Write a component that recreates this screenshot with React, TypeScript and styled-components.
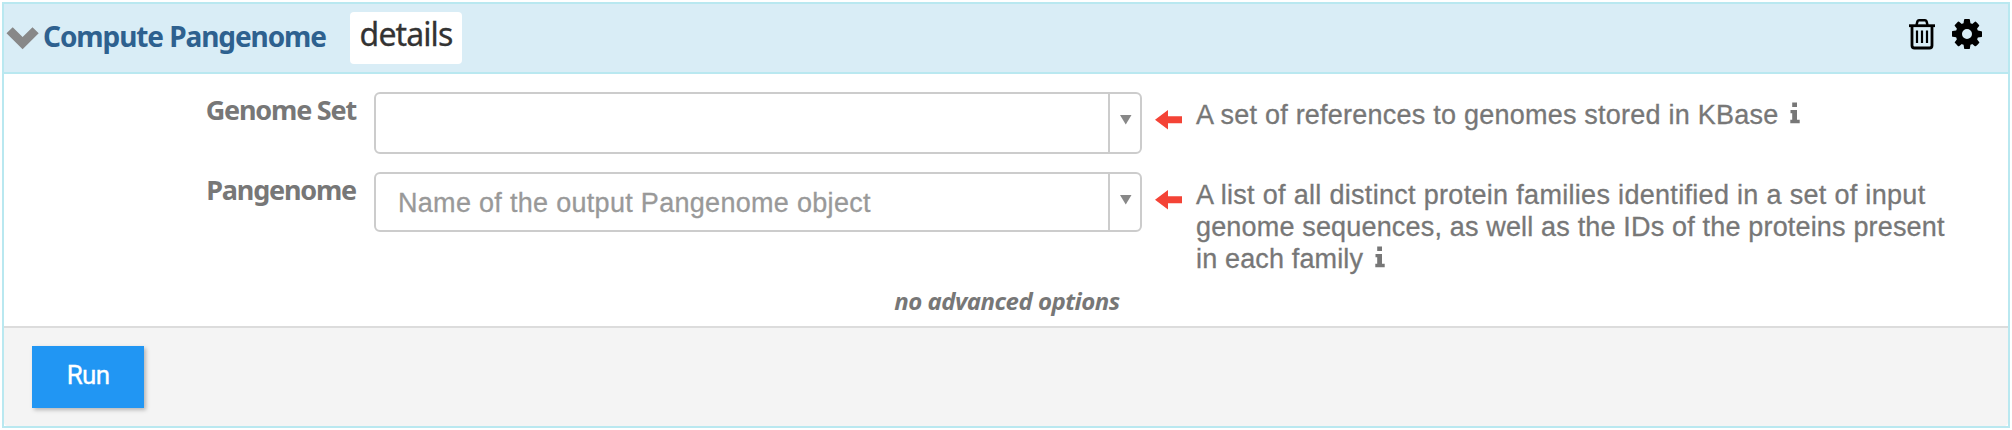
import React from 'react';
import styled, { createGlobalStyle } from 'styled-components';

const GlobalStyle = createGlobalStyle`
  * { box-sizing: border-box; }
  body { margin: 0; background: #fff; }
`;

const titleFont = '"Noto Sans", "Open Sans", sans-serif';
const bodyFont = '"Liberation Sans", Arial, sans-serif';

const Page = styled.div`
  padding: 2px;
  height: 430px;
`;

const Panel = styled.section`
  display: flex;
  flex-direction: column;
  height: 426px;
  border: 2px solid #b9e8f0;
`;

const Header = styled.header`
  display: flex;
  align-items: center;
  height: 70px;
  padding: 0 26px 0 2px;
  background: #d9edf6;
  border-bottom: 2px solid #b9e8f0;
`;

const Title = styled.h1`
  width: 283px;
  margin: 0 0 5px 4px;
  font: bold 28px/62px ${titleFont};
  letter-spacing: -1.08px;
  color: #2e618f;
  white-space: nowrap;
`;

const Details = styled.button`
  width: 112px;
  height: 52px;
  margin-left: 24px;
  padding: 0 0 9px;
  border: 0;
  border-radius: 4px;
  background: #fff;
  color: #333;
  font: 32px/43px ${titleFont};
  letter-spacing: -0.9px;
  -webkit-text-stroke: 0.3px;
`;

const Actions = styled.div`
  display: flex;
  gap: 16px;
  margin: 0 0 8px auto;
`;

const Body = styled.div`
  height: 252px;
  padding-top: 18px;
`;

const FieldRow = styled.div`
  display: grid;
  grid-template-columns: 357px 768px 27px 1fr;
  column-gap: 13px;
  min-height: 80px;
`;

const Label = styled.label`
  padding: 1px 5px 0 0;
  font: bold 27px/34px ${titleFont};
  letter-spacing: -1.2px;
  color: #777;
  text-align: right;
`;

const Select = styled.div<{ $height: number }>`
  display: flex;
  height: ${p => p.$height}px;
  border: 2px solid #ccc;
  border-radius: 6px;
  background: #fff;
`;

const Placeholder = styled.span`
  flex: 1;
  display: flex;
  align-items: center;
  padding: 2px 0 0 22px;
  font: 27px ${bodyFont};
  letter-spacing: 0.3px;
  color: #999;
  -webkit-text-stroke: 0.3px;
`;

const Toggle = styled.span`
  width: 32px;
  padding: 21px 0 0 10px;
  border-left: 2px solid #ccc;
  line-height: 0;
`;

const ArrowSlot = styled.span`
  padding-top: 18px;
  line-height: 0;
`;

const Description = styled.p`
  margin: 0;
  padding: 7px 0 0 1px;
  font: 27px/32px ${bodyFont};
  color: #777;
  -webkit-text-stroke: 0.3px;
`;

const TextLine = styled.span<{ $tracking: number }>`
  display: flex;
  align-items: flex-start;
  white-space: nowrap;
  letter-spacing: ${p => p.$tracking}px;
`;

const Advanced = styled.div`
  margin-top: 10px;
  font: italic bold 24px/32px ${titleFont};
  letter-spacing: -0.5px;
  text-align: center;
  text-indent: 2px;
  color: #777;
`;

const Footer = styled.footer`
  flex: 1;
  padding: 18px 28px;
  background: #f4f4f4;
  border-top: 2px solid #dcdcdc;
  border-radius: 0 0 4px 4px;
`;

const RunButton = styled.button`
  display: block;
  width: 112px;
  height: 62px;
  padding: 0 0 4px;
  border: 0;
  background: #2196f3;
  box-shadow: 2px 2px 4px rgba(0, 0, 0, 0.26);
  color: #fff;
  font: 26px Roboto, sans-serif;
  letter-spacing: -0.7px;
  -webkit-text-stroke: 0.3px;
`;

const InfoSvg = styled.svg`
  margin: 3px 0 0 12px;
`;

const Chevron = () => (
  <svg width="33" height="24" viewBox="0 0 33 24">
    <path d="M0.500 7.300 6.700 1.200 16.600 11.100 26.500 1.200 32.700 7.300 16.600 23.200Z" fill="#888" />
  </svg>
);

const Trash = () => (
  <svg width="28" height="32" viewBox="0 0 28 32" fill="none" stroke="#000">
    <path d="M1 7.700H27" strokeWidth="2.800" />
    <path d="M8.500 7 9.500 3.200Q9.900 2.300 11 2.300H17Q18.100 2.300 18.500 3.200L19.500 7" strokeWidth="2.500" />
    <path d="M4 8V27.500Q4 30 6.500 30H21.500Q24 30 24 27.500V8" strokeWidth="2.800" />
    <path d="M9 12.500V25M14 12.500V25M19 12.500V25" strokeWidth="2.200" />
  </svg>
);

const Gear = () => (
  <svg width="30" height="32" viewBox="0 -50 1536 1638">
    <path d="M1024 768q0-106-75-181t-181-75-181 75-75 181 75 181 181 75 181-75 75-181zm512-109v222q0 12-8 23t-20 13l-185 28q-19 54-39 91 35 50 107 138 10 12 10 25t-9 23q-27 37-99 108t-94 71q-12 0-26-9l-138-108q-44 23-91 38-16 136-29 186-7 28-36 28h-222q-14 0-24.500-8.500t-11.500-21.500l-28-184q-49-16-90-37l-141 107q-10 9-25 9-14 0-25-11-126-114-165-168-7-10-7-23 0-12 8-23 15-21 51-66.500t54-70.500q-27-50-41-99l-183-27q-13-2-21-12.500t-8-23.500v-222q0-12 8-23t19-13l186-28q14-46 39-92-40-57-107-138-10-12-10-24 0-10 9-23 26-36 98.500-107.500t94.500-71.500q13 0 26 10l138 107q44-23 91-38 16-136 29-186 7-28 36-28h222q14 0 24.500 8.500t11.500 21.500l28 184q49 16 90 37l142-107q9-9 24-9 13 0 25 10 129 119 165 170 7 8 7 22 0 12-8 23-15 21-51 66.500t-54 70.500q26 50 41 98l183 28q13 2 21 12.500t8 23.500z" />
  </svg>
);

const Caret = () => (
  <svg width="12" height="10" viewBox="0 0 12 10">
    <path d="M0 0H11.500L5.750 9.500Z" fill="#888" />
  </svg>
);

const RequiredArrow = () => (
  <svg width="27" height="20" viewBox="0 0 27 20">
    <path d="M0 9.700 13 0V6.200H27V13.200H13V19.500Z" fill="#f44336" />
  </svg>
);

const Info = () => (
  <InfoSvg width="10" height="22" viewBox="0 0 10 22">
    <path d="M2.200.500H7V5H2.200ZM.500 8H7V17.800H9.700V21.300H.300V17.800H2.200V11.300H.500Z" fill="#777" />
  </InfoSvg>
);

interface ParamProps {
  label: string;
  placeholder?: string;
  height: number;
  children: React.ReactNode;
}

const Param = ({ label, placeholder, height, children }: ParamProps) => (
  <FieldRow>
    <Label>{label}</Label>
    <Select $height={height}>
      <Placeholder>{placeholder}</Placeholder>
      <Toggle><Caret /></Toggle>
    </Select>
    <ArrowSlot><RequiredArrow /></ArrowSlot>
    <Description>{children}</Description>
  </FieldRow>
);

export default function App() {
  return (
    <Page>
      <GlobalStyle />
      <Panel>
        <Header>
          <Chevron />
          <Title>Compute Pangenome</Title>
          <Details>details</Details>
          <Actions>
            <Trash />
            <Gear />
          </Actions>
        </Header>
        <Body>
          <Param label="Genome Set" height={62}>
            <TextLine $tracking={0.23}>A set of references to genomes stored in KBase<Info /></TextLine>
          </Param>
          <Param label="Pangenome" placeholder="Name of the output Pangenome object" height={60}>
            <TextLine $tracking={0.31}>A list of all distinct protein families identified in a set of input</TextLine>
            <TextLine $tracking={0.17}>genome sequences, as well as the IDs of the proteins present</TextLine>
            <TextLine $tracking={0.15}>in each family<Info /></TextLine>
          </Param>
          <Advanced>no advanced options</Advanced>
        </Body>
        <Footer>
          <RunButton>Run</RunButton>
        </Footer>
      </Panel>
    </Page>
  );
}
